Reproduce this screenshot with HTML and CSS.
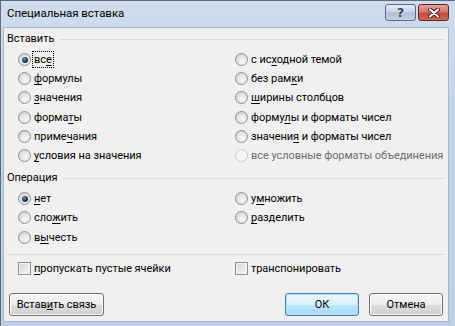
FILE: index.html
```html
<!DOCTYPE html>
<html lang="ru">
<head>
<meta charset="utf-8">
<title>Специальная вставка</title>
<link rel="stylesheet" href="styles.css">
</head>
<body>
<div class="window">
  <div class="titlebar">
    <span class="title">Специальная вставка</span>
    <div class="tbtns">
      <span class="tbtn help">?</span>
      <span class="tbtn close">
        <svg width="16" height="10" viewBox="0 0 16 10">
          <path d="M4 1.5 L12 8.5 M12 1.5 L4 8.5" stroke="#3a1a16" stroke-width="4" stroke-linecap="round"/>
          <path d="M4 1.5 L12 8.5 M12 1.5 L4 8.5" stroke="#ffffff" stroke-width="2.2" stroke-linecap="round"/>
        </svg>
      </span>
    </div>
  </div>
  <div class="client">
    <div class="group-head"><span>Вставить</span><i class="rule"></i></div>
    <div class="grid paste">
      <label class="opt"><span class="radio on"></span><span class="lbl focus">вс<u>е</u></span></label>
      <label class="opt"><span class="radio"></span><span class="lbl"><u>ф</u>ормулы</span></label>
      <label class="opt"><span class="radio"></span><span class="lbl"><u>з</u>начения</span></label>
      <label class="opt"><span class="radio"></span><span class="lbl">форма<u>т</u>ы</span></label>
      <label class="opt"><span class="radio"></span><span class="lbl">приме<u>ч</u>ания</span></label>
      <label class="opt"><span class="radio"></span><span class="lbl"><u>у</u>словия на значения</span></label>
      <label class="opt"><span class="radio"></span><span class="lbl">с ис<u>х</u>одной темой</span></label>
      <label class="opt"><span class="radio"></span><span class="lbl">без рам<u>к</u>и</span></label>
      <label class="opt"><span class="radio"></span><span class="lbl"><u>ш</u>ирины столбцов</span></label>
      <label class="opt"><span class="radio"></span><span class="lbl">форму<u>л</u>ы и форматы чисел</span></label>
      <label class="opt"><span class="radio"></span><span class="lbl">значени<u>я</u> и форматы чисел</span></label>
      <label class="opt disabled"><span class="radio"></span><span class="lbl">все условные форматы объединения</span></label>
    </div>
    <div class="group-head op-head"><span>Операция</span><i class="rule"></i></div>
    <div class="grid op">
      <label class="opt"><span class="radio on"></span><span class="lbl"><u>н</u>ет</span></label>
      <label class="opt"><span class="radio"></span><span class="lbl">сло<u>ж</u>ить</span></label>
      <label class="opt"><span class="radio"></span><span class="lbl">в<u>ы</u>честь</span></label>
      <label class="opt"><span class="radio"></span><span class="lbl">у<u>м</u>ножить</span></label>
      <label class="opt"><span class="radio"></span><span class="lbl"><u>р</u>азделить</span></label>
    </div>
    <div class="sep"></div>
    <div class="grid checks">
      <label class="opt"><span class="check"></span><span class="lbl"><u>п</u>ропускать пустые ячейки</span></label>
      <label class="opt"><span class="check"></span><span class="lbl">транспонировать</span></label>
    </div>
    <div class="buttons">
      <span class="btn link">Встав<u>и</u>ть связь</span>
      <span class="spacer"></span>
      <span class="btn ok">ОК</span>
      <span class="btn">Отмена</span>
    </div>
  </div>
</div>
</body>
</html>
```

FILE: styles.css
```css
* { box-sizing: border-box; }
html, body { margin: 0; padding: 0; }
body {
  width: 455px;
  height: 326px;
  overflow: hidden;
  font-family: Roboto, "Noto Sans", sans-serif;
  font-size: 11px;
  letter-spacing: -0.05px;
  color: #000;
}
.window {
  width: 455px;
  height: 326px;
  display: flex;
  flex-direction: column;
  border-top: 1px solid #5d6b7d;
  border-left: 1px solid #5d6b7d;
  padding: 0 6px 4px 2px;
  background: linear-gradient(to bottom, #cfdcec 0%, #c3d3e8 40%, #bfd0e6 100%);
}
.titlebar {
  height: 26px;
  display: flex;
  align-items: flex-start;
  justify-content: space-between;
  flex: none;
}
.title {
  margin: 4px 0 0 4px;
  line-height: 16px;
  font-size: 11.5px;
  color: #000;
}
.tbtns {
  display: flex;
  gap: 2px;
  margin-top: 3px;
  margin-right: 0;
}
.tbtn {
  height: 17px;
  border: 1px solid #5b6a80;
  border-radius: 3px;
  display: flex;
  align-items: center;
  justify-content: center;
}
.help {
  width: 31px;
  background: linear-gradient(to bottom, #e3ebf5 0%, #c6d4e6 48%, #aebfd6 52%, #c4d3e6 100%);
  font-family: "DejaVu Sans", sans-serif;
  font-weight: bold;
  font-size: 13px;
  color: #3b4453;
  line-height: 15px;
  text-shadow: 0 0 1px #fff;
}
.close {
  width: 31px;
  border-color: #5a2a24;
  background: linear-gradient(to bottom, #e6a298 0%, #d6776b 45%, #c24b3c 55%, #d1665a 100%);
}
.client {
  flex: 1;
  background: #f0f0f0;
  border: 1px solid #a8b8cc;
  display: flex;
  flex-direction: column;
  padding: 3px 3px 0 0;
}
.group-head {
  display: flex;
  align-items: center;
  gap: 6px;
  height: 16px;
  line-height: 16px;
  padding-left: 3px;
}
.group-head .rule {
  flex: 1;
  height: 1px;
  background: #d5dbe3;
}
.op-head { margin-top: 5px; }
.grid {
  display: grid;
  grid-template-columns: 217px 1fr;
  grid-auto-flow: column;
  padding-left: 14px;
}
.paste {
  margin-top: 3px;
  grid-template-rows: repeat(6, 19.2px);
}
.op {
  margin-top: 3px;
  grid-template-rows: repeat(3, 19.2px);
}
.checks {
  margin-top: 4.5px;
  grid-template-rows: 19px;
}
.opt {
  display: flex;
  align-items: center;
  gap: 3px;
  white-space: nowrap;
}
.lbl { line-height: 15px; }
.lbl u { text-underline-offset: 2px; }
.focus { outline: 1px dotted #000; outline-offset: 0; padding: 0 1px; margin-left: -1px; }
.radio {
  width: 13px;
  height: 13px;
  border-radius: 50%;
  border: 1px solid #8e8f8f;
  background: radial-gradient(circle at 60% 65%, #f8f8f8 0%, #e6e6e6 45%, #c9c9c9 100%);
  flex: none;
  display: flex;
  align-items: center;
  justify-content: center;
}
.radio.on::after {
  content: "";
  width: 6px;
  height: 6px;
  border-radius: 50%;
  background: radial-gradient(circle at 40% 35%, #6f8fb8 0%, #1d3556 55%, #0a1526 100%);
}
.disabled .lbl { color: #6d6d6d; }
.disabled .radio {
  border-color: #c9c9c9;
  background: #f4f4f4;
}
.check {
  width: 13px;
  height: 13px;
  border: 1px solid #8e8f8f;
  background: linear-gradient(135deg, #d4d4d4 0%, #eaeaea 60%, #f7f7f7 100%);
  box-shadow: inset 0 0 0 1px #f4f4f4;
  flex: none;
}
.sep {
  margin: 7px 0 0 3px;
  height: 1px;
  background: #d5dbe3;
}
.buttons {
  margin-top: 14.5px;
  display: flex;
  padding: 0 2px 0 5px;
  gap: 10px;
}
.spacer { flex: 1; }
.btn {
  height: 23px;
  width: 74px;
  border: 1px solid #707070;
  border-radius: 3px;
  display: flex;
  align-items: center;
  justify-content: center;
  background: linear-gradient(to bottom, #f6f6f6 0%, #ececec 50%, #dddddd 51%, #d1d1d1 100%);
  box-shadow: inset 0 0 0 1px #fcfcfc;
  line-height: 15px;
}
.btn.link { width: 95px; }
.btn.ok {
  border-color: #3c7fb1;
  box-shadow: inset 0 0 0 1px #b6e2f8;
  background: linear-gradient(to bottom, #eaf6fd 0%, #d9f0fc 50%, #bee6fd 51%, #a7d9f5 100%);
}
```
